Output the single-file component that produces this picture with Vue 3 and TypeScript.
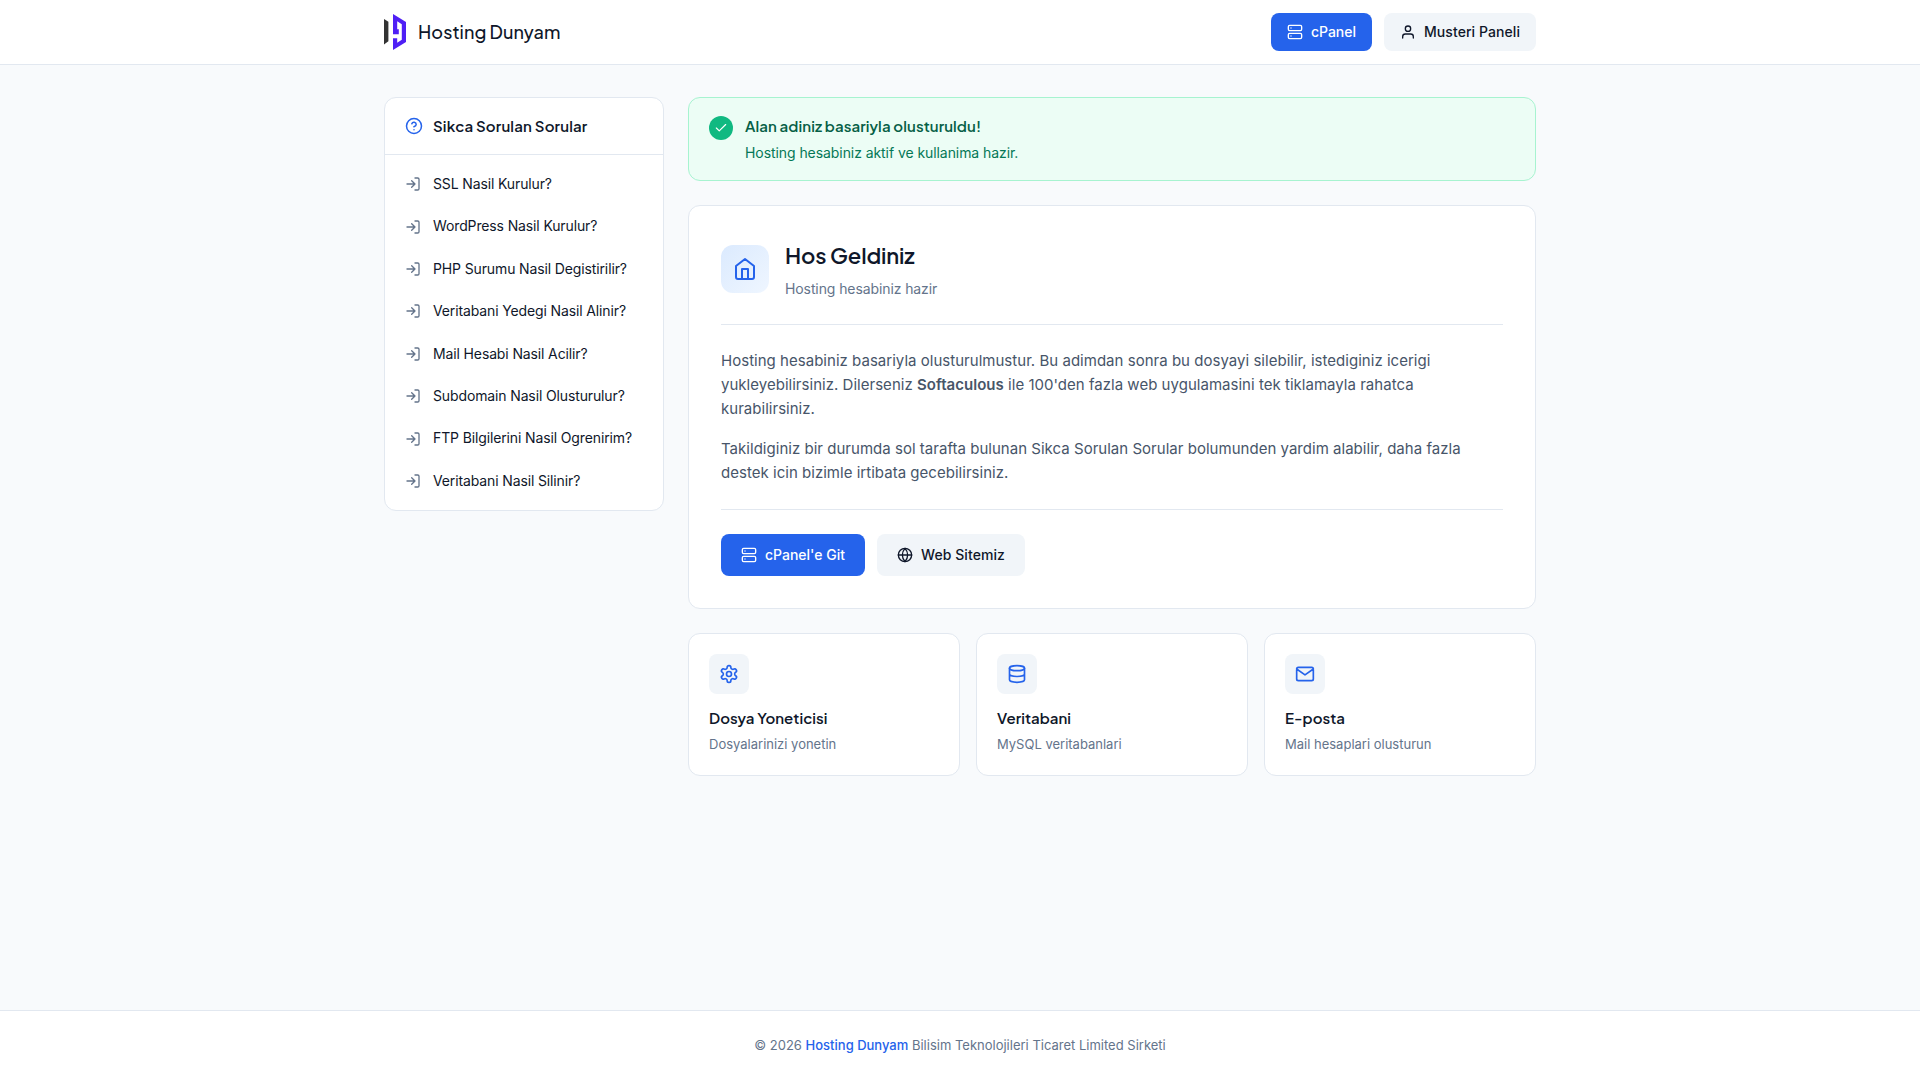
<script setup lang="ts">
import { h, type FunctionalComponent } from 'vue'

const shapes: Record<string, [string, Record<string, string | number>][]> = {
  server: [
    ['rect', { x: 2, y: 2, width: 20, height: 8, rx: 2 }],
    ['rect', { x: 2, y: 14, width: 20, height: 8, rx: 2 }],
    ['path', { d: 'M6 6h.01M6 18h.01' }],
  ],
  user: [
    ['path', { d: 'M20 21v-2a4 4 0 0 0-4-4H8a4 4 0 0 0-4 4v2' }],
    ['circle', { cx: 12, cy: 7, r: 4 }],
  ],
  help: [
    ['circle', { cx: 12, cy: 12, r: 10 }],
    ['path', { d: 'M9.09 9a3 3 0 0 1 5.83 1c0 2-3 3-3 3M12 17h.01' }],
  ],
  login: [['path', { d: 'M15 3h4a2 2 0 0 1 2 2v14a2 2 0 0 1-2 2h-4M10 17l5-5-5-5M15 12H3' }]],
  check: [['path', { d: 'M20 6 9 17l-5-5' }]],
  home: [['path', { d: 'M3 9l9-7 9 7v11a2 2 0 0 1-2 2H5a2 2 0 0 1-2-2zM9 22V12h6v10' }]],
  globe: [
    ['circle', { cx: 12, cy: 12, r: 10 }],
    ['path', { d: 'M2 12h20M12 2a15.3 15.3 0 0 1 4 10 15.3 15.3 0 0 1-4 10 15.3 15.3 0 0 1-4-10 15.3 15.3 0 0 1 4-10z' }],
  ],
  settings: [
    ['path', { d: 'M12.22 2h-.44a2 2 0 0 0-2 2v.18a2 2 0 0 1-1 1.73l-.43.25a2 2 0 0 1-2 0l-.15-.08a2 2 0 0 0-2.73.73l-.22.38a2 2 0 0 0 .73 2.73l.15.1a2 2 0 0 1 1 1.72v.51a2 2 0 0 1-1 1.74l-.15.09a2 2 0 0 0-.73 2.73l.22.38a2 2 0 0 0 2.73.73l.15-.08a2 2 0 0 1 2 0l.43.25a2 2 0 0 1 1 1.73V20a2 2 0 0 0 2 2h.44a2 2 0 0 0 2-2v-.18a2 2 0 0 1 1-1.73l.43-.25a2 2 0 0 1 2 0l.15.08a2 2 0 0 0 2.73-.73l.22-.39a2 2 0 0 0-.73-2.73l-.15-.08a2 2 0 0 1-1-1.74v-.5a2 2 0 0 1 1-1.74l.15-.09a2 2 0 0 0 .73-2.73l-.22-.38a2 2 0 0 0-2.73-.73l-.15.08a2 2 0 0 1-2 0l-.43-.25a2 2 0 0 1-1-1.73V4a2 2 0 0 0-2-2z' }],
    ['circle', { cx: 12, cy: 12, r: 3 }],
  ],
  database: [
    ['ellipse', { cx: 12, cy: 5, rx: 9, ry: 3 }],
    ['path', { d: 'M21 12c0 1.66-4 3-9 3s-9-1.34-9-3M3 5v14c0 1.66 4 3 9 3s9-1.34 9-3V5' }],
  ],
  mail: [['path', { d: 'M4 4h16c1.1 0 2 .9 2 2v12c0 1.1-.9 2-2 2H4c-1.1 0-2-.9-2-2V6c0-1.1.9-2 2-2zM22 6l-10 7L2 6' }]],
}

const Icon: FunctionalComponent<{ name: string; size: number; stroke?: number }> = (p) =>
  h(
    'svg',
    {
      width: p.size,
      height: p.size,
      viewBox: '0 0 24 24',
      fill: 'none',
      stroke: 'currentColor',
      'stroke-width': p.stroke ?? 2,
      'stroke-linecap': 'round',
      'stroke-linejoin': 'round',
    },
    shapes[p.name].map(([tag, attrs]) => h(tag, attrs)),
  )
Icon.props = ['name', 'size', 'stroke']

const questions: string[] = [
  'SSL Nasil Kurulur?',
  'WordPress Nasil Kurulur?',
  'PHP Surumu Nasil Degistirilir?',
  'Veritabani Yedegi Nasil Alinir?',
  'Mail Hesabi Nasil Acilir?',
  'Subdomain Nasil Olusturulur?',
  'FTP Bilgilerini Nasil Ogrenirim?',
  'Veritabani Nasil Silinir?',
]

const features = [
  { icon: 'settings', title: 'Dosya Yoneticisi', text: 'Dosyalarinizi yonetin' },
  { icon: 'database', title: 'Veritabani', text: 'MySQL veritabanlari' },
  { icon: 'mail', title: 'E-posta', text: 'Mail hesaplari olusturun' },
]
</script>

<template>
  <div class="page">
    <header class="header">
      <div class="container header-inner">
        <a class="brand">
          <svg class="logo" width="22" height="36" viewBox="0 0 22 36">
            <path d="M0 5l4.4 2.8v19.4L0 30.5z" fill="#333" />
            <path d="M9 0l13 8v20L9 36V24.2h4.2v4.5l4.6-3V10.3l-4.6-3v7.9h1.6v5H9z" fill="#4f1ff5" />
          </svg>
          <span class="brand-name">Hosting Dunyam</span>
        </a>
        <nav class="nav">
          <a class="btn primary"><Icon name="server" :size="16" />cPanel</a>
          <a class="btn secondary"><Icon name="user" :size="16" />Musteri Paneli</a>
        </nav>
      </div>
    </header>

    <main class="container main">
      <aside class="card sidebar">
        <div class="sidebar-head">
          <Icon name="help" :size="18" />
          <h2>Sikca Sorulan Sorular</h2>
        </div>
        <ul class="faq">
          <li v-for="q in questions" :key="q"><Icon name="login" :size="16" />{{ q }}</li>
        </ul>
      </aside>

      <div class="content">
        <section class="alert">
          <span class="alert-icon"><Icon name="check" :size="14" /></span>
          <div>
            <h3>Alan adiniz basariyla olusturuldu!</h3>
            <p>Hosting hesabiniz aktif ve kullanima hazir.</p>
          </div>
        </section>

        <section class="card welcome">
          <div class="welcome-head">
            <span class="welcome-icon"><Icon name="home" :size="24" /></span>
            <div>
              <h1>Hos Geldiniz</h1>
              <p>Hosting hesabiniz hazir</p>
            </div>
          </div>
          <div class="welcome-body">
            <p>
              Hosting hesabiniz basariyla olusturulmustur. Bu adimdan sonra bu dosyayi silebilir, istediginiz icerigi
              yukleyebilirsiniz. Dilerseniz <strong>Softaculous</strong> ile 100'den fazla web uygulamasini tek
              tiklamayla rahatca kurabilirsiniz.
            </p>
            <p>
              Takildiginiz bir durumda sol tarafta bulunan Sikca Sorulan Sorular bolumunden yardim alabilir, daha fazla
              destek icin bizimle irtibata gecebilirsiniz.
            </p>
          </div>
          <div class="actions">
            <a class="btn large primary"><Icon name="server" :size="16" />cPanel'e Git</a>
            <a class="btn large secondary"><Icon name="globe" :size="16" />Web Sitemiz</a>
          </div>
        </section>

        <section class="features">
          <article v-for="f in features" :key="f.title" class="card feature">
            <span class="feature-icon"><Icon :name="f.icon" :size="20" /></span>
            <h3>{{ f.title }}</h3>
            <p>{{ f.text }}</p>
          </article>
        </section>
      </div>
    </main>

    <footer class="footer">
      <p>© 2026 <a>Hosting Dunyam</a> Bilisim Teknolojileri Ticaret Limited Sirketi</p>
    </footer>
  </div>
</template>

<style>
body {
  margin: 0;
  background: #f8fafc;
}
</style>

<style scoped>
.page {
  min-height: 100vh;
  display: flex;
  flex-direction: column;
  font-family: Inter, 'Liberation Sans', sans-serif;
  font-size: 16px;
  line-height: 1.6;
  color: #0f172a;
  -webkit-font-smoothing: antialiased;
}
.page * {
  box-sizing: border-box;
}
h1, h2, h3, p, ul {
  margin: 0;
  padding: 0;
}
svg {
  flex-shrink: 0;
  display: block;
}
h1, h2, h3, .brand-name {
  font-family: 'Plus Jakarta Sans', Inter, sans-serif;
  font-weight: 600;
}
.container {
  width: 100%;
  max-width: 1200px;
  margin: 0 auto;
  padding: 0 24px;
  box-sizing: border-box;
}
.header {
  background: #fff;
  border-bottom: 1px solid #e2e8f0;
}
.header-inner {
  height: 64px;
  display: flex;
  align-items: center;
  justify-content: space-between;
}
.brand {
  display: flex;
  align-items: center;
  gap: 12px;
}
.brand-name {
  font-size: 18px;
  font-weight: 500;
  letter-spacing: 0.07px;
  white-space: nowrap;
}
.nav, .actions {
  display: flex;
  gap: 12px;
}
.btn {
  display: inline-flex;
  align-items: center;
  gap: 8px;
  padding: 8px 16px;
  border-radius: 8px;
  font-size: 14px;
  font-weight: 500;
  white-space: nowrap;
}
.btn.large {
  padding: 10px 20px;
}
.primary {
  background: #2563eb;
  color: #fff;
}
.secondary {
  background: #f1f5f9;
  color: #0f172a;
  letter-spacing: 0.07px;
}
.main {
  flex: 1;
  display: grid;
  grid-template-columns: 280px minmax(0, 1fr);
  gap: 24px;
  align-items: start;
  padding-top: 32px;
  padding-bottom: 32px;
}
.card {
  background: #fff;
  border: 1px solid #e2e8f0;
  border-radius: 12px;
}
.sidebar-head {
  display: flex;
  align-items: center;
  gap: 10px;
  padding: 16px 20px;
  border-bottom: 1px solid #e2e8f0;
}
.sidebar-head svg {
  color: #2563eb;
}
.sidebar-head h2 {
  font-size: 15px;
  letter-spacing: 0.16px;
}
.faq {
  list-style: none;
  padding: 8px;
}
.faq li {
  display: flex;
  align-items: center;
  gap: 12px;
  padding: 10px 12px;
  font-size: 14px;
  letter-spacing: -0.13px;
}
.faq svg {
  color: #64748b;
}
.content {
  display: flex;
  flex-direction: column;
  gap: 24px;
}
.alert {
  display: flex;
  align-items: flex-start;
  gap: 12px;
  padding: 16px 20px;
  background: #ecfdf5;
  border: 1px solid #a7f3d0;
  border-radius: 12px;
}
.alert-icon {
  width: 24px;
  height: 24px;
  margin-top: 2px;
  border-radius: 50%;
  background: #10b981;
  color: #fff;
  display: flex;
  align-items: center;
  justify-content: center;
}
.alert h3 {
  font-size: 15px;
  letter-spacing: 0.09px;
  color: #065f46;
  margin-bottom: 4px;
}
.alert p {
  font-size: 14px;
  letter-spacing: -0.07px;
  color: #047857;
}
.welcome {
  padding: 32px;
}
.welcome-head {
  display: flex;
  align-items: center;
  gap: 16px;
  padding-bottom: 24px;
  margin-bottom: 24px;
  border-bottom: 1px solid #e2e8f0;
}
.welcome-icon {
  width: 48px;
  height: 48px;
  border-radius: 12px;
  background: linear-gradient(135deg, #dbeafe, #eff6ff);
  color: #2563eb;
  display: flex;
  align-items: center;
  justify-content: center;
}
.welcome h1 {
  font-size: 22px;
  letter-spacing: -0.14px;
  margin-bottom: 4px;
}
.welcome-head p {
  font-size: 14px;
  letter-spacing: -0.1px;
  color: #64748b;
}
.welcome-body {
  font-size: 15px;
  letter-spacing: 0.025px;
  color: #475569;
}
.welcome-body p + p {
  margin-top: 16px;
}
.welcome-body strong {
  font-weight: 600;
}
.actions {
  margin-top: 24px;
  padding-top: 24px;
  border-top: 1px solid #e2e8f0;
}
.features {
  display: grid;
  grid-template-columns: repeat(3, 1fr);
  gap: 16px;
}
.feature {
  padding: 20px;
}
.feature-icon {
  width: 40px;
  height: 40px;
  margin-bottom: 12px;
  border-radius: 8px;
  background: #f1f5f9;
  color: #2563eb;
  display: flex;
  align-items: center;
  justify-content: center;
}
.feature h3 {
  font-size: 15px;
  letter-spacing: 0.03px;
  margin-bottom: 4px;
}
.feature p {
  font-size: 13px;
  color: #64748b;
}
.footer {
  background: #fff;
  border-top: 1px solid #e2e8f0;
  padding: 24px;
  text-align: center;
  font-size: 13px;
  color: #64748b;
}
.footer a {
  color: #2563eb;
  font-weight: 500;
}
</style>
